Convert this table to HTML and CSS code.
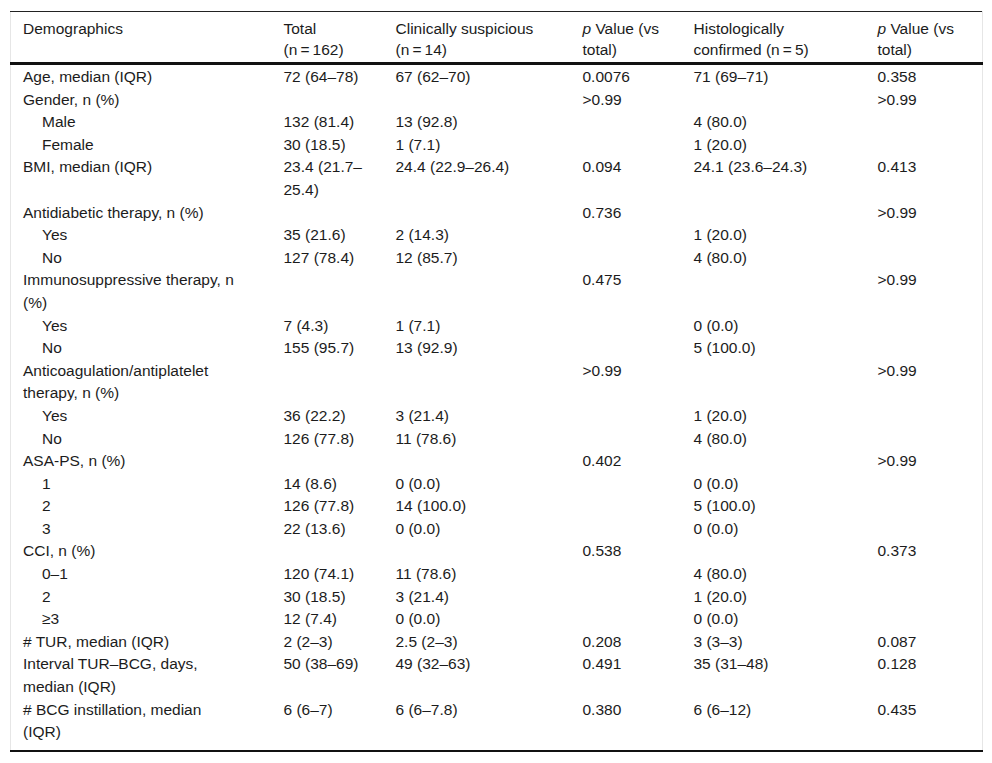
FILE: index.html
```html
<!DOCTYPE html>
<html lang="en">
<head>
<meta charset="utf-8">
<title>Demographics</title>
<link rel="stylesheet" href="styles.css">
</head>
<body>
<div class="wrap">
<table class="demo">
<colgroup>
<col class="c1"><col class="c2"><col class="c3"><col class="c4"><col class="c5"><col class="c6">
</colgroup>
<thead>
<tr>
<th class="first">Demographics</th>
<th>Total<br><span class="nw">(n&thinsp;=&thinsp;162)</span></th>
<th>Clinically suspicious <span class="nw">(n&thinsp;=&thinsp;14)</span></th>
<th><i>p</i> Value (vs total)</th>
<th>Histologically confirmed <span class="nw">(n&thinsp;=&thinsp;5)</span></th>
<th><i>p</i> Value (vs total)</th>
</tr>
</thead>
<tbody>
<tr><td class="first">Age, median (IQR)</td><td>72 (64–78)</td><td>67 (62–70)</td><td>0.0076</td><td>71 (69–71)</td><td>0.358</td></tr>
<tr><td class="first">Gender, n (%)</td><td></td><td></td><td>&gt;0.99</td><td></td><td>&gt;0.99</td></tr>
<tr><td class="first sub">Male</td><td>132 (81.4)</td><td>13 (92.8)</td><td></td><td>4 (80.0)</td><td></td></tr>
<tr><td class="first sub">Female</td><td>30 (18.5)</td><td>1 (7.1)</td><td></td><td>1 (20.0)</td><td></td></tr>
<tr><td class="first">BMI, median (IQR)</td><td>23.4 (21.7–25.4)</td><td>24.4 (22.9–26.4)</td><td>0.094</td><td>24.1 (23.6–24.3)</td><td>0.413</td></tr>
<tr><td class="first">Antidiabetic therapy, n (%)</td><td></td><td></td><td>0.736</td><td></td><td>&gt;0.99</td></tr>
<tr><td class="first sub">Yes</td><td>35 (21.6)</td><td>2 (14.3)</td><td></td><td>1 (20.0)</td><td></td></tr>
<tr><td class="first sub">No</td><td>127 (78.4)</td><td>12 (85.7)</td><td></td><td>4 (80.0)</td><td></td></tr>
<tr><td class="first">Immunosuppressive therapy, n (%)</td><td></td><td></td><td>0.475</td><td></td><td>&gt;0.99</td></tr>
<tr><td class="first sub">Yes</td><td>7 (4.3)</td><td>1 (7.1)</td><td></td><td>0 (0.0)</td><td></td></tr>
<tr><td class="first sub">No</td><td>155 (95.7)</td><td>13 (92.9)</td><td></td><td>5 (100.0)</td><td></td></tr>
<tr><td class="first">Anticoagulation/antiplatelet therapy, n (%)</td><td></td><td></td><td>&gt;0.99</td><td></td><td>&gt;0.99</td></tr>
<tr><td class="first sub">Yes</td><td>36 (22.2)</td><td>3 (21.4)</td><td></td><td>1 (20.0)</td><td></td></tr>
<tr><td class="first sub">No</td><td>126 (77.8)</td><td>11 (78.6)</td><td></td><td>4 (80.0)</td><td></td></tr>
<tr><td class="first">ASA-PS, n (%)</td><td></td><td></td><td>0.402</td><td></td><td>&gt;0.99</td></tr>
<tr><td class="first sub">1</td><td>14 (8.6)</td><td>0 (0.0)</td><td></td><td>0 (0.0)</td><td></td></tr>
<tr><td class="first sub">2</td><td>126 (77.8)</td><td>14 (100.0)</td><td></td><td>5 (100.0)</td><td></td></tr>
<tr><td class="first sub">3</td><td>22 (13.6)</td><td>0 (0.0)</td><td></td><td>0 (0.0)</td><td></td></tr>
<tr><td class="first">CCI, n (%)</td><td></td><td></td><td>0.538</td><td></td><td>0.373</td></tr>
<tr><td class="first sub">0–1</td><td>120 (74.1)</td><td>11 (78.6)</td><td></td><td>4 (80.0)</td><td></td></tr>
<tr><td class="first sub">2</td><td>30 (18.5)</td><td>3 (21.4)</td><td></td><td>1 (20.0)</td><td></td></tr>
<tr><td class="first sub">≥3</td><td>12 (7.4)</td><td>0 (0.0)</td><td></td><td>0 (0.0)</td><td></td></tr>
<tr><td class="first"># TUR, median (IQR)</td><td>2 (2–3)</td><td>2.5 (2–3)</td><td>0.208</td><td>3 (3–3)</td><td>0.087</td></tr>
<tr><td class="first">Interval TUR–BCG, days, median (IQR)</td><td>50 (38–69)</td><td>49 (32–63)</td><td>0.491</td><td>35 (31–48)</td><td>0.128</td></tr>
<tr class="last"><td class="first"># BCG instillation, median (IQR)</td><td>6 (6–7)</td><td>6 (6–7.8)</td><td>0.380</td><td>6 (6–12)</td><td>0.435</td></tr>
</tbody>
</table>
</div>
</body>
</html>
```
FILE: styles.css
```css
html, body {
  margin: 0;
  padding: 0;
  background: #fff;
}
.wrap {
  padding: 11px 10px 0 10px;
}
.demo {
  width: 972px;
  table-layout: fixed;
  border-collapse: collapse;
  font-family: "Liberation Sans", Arial, sans-serif;
  font-size: 15.5px;
  color: #1c1c1c;
  border-left: 1px solid #e6e6e6;
  border-right: 1px solid #e6e6e6;
  border-top: 1px solid #222;
  border-bottom: 2px solid #111;
}
.c1 { width: 261px; }
.c2 { width: 112px; }
.c3 { width: 187px; }
.c4 { width: 111px; }
.c5 { width: 184px; }
.c6 { width: 117px; }
.nw {
  white-space: nowrap;
}
.demo th {
  font-weight: normal;
  text-align: left;
  vertical-align: top;
  line-height: 21px;
  padding: 6px 12px 2px 12px;
  border-bottom: 3px solid #111;
}
.demo td {
  text-align: left;
  vertical-align: top;
  line-height: 22.6px;
  padding: 0 12px;
}
.demo .first {
  padding-right: 34px;
}
.demo td.sub {
  padding-left: 31px;
}
.demo tbody tr:first-child td {
  padding-top: 1px;
}
.demo tr.last td {
  padding-bottom: 6px;
}
```
